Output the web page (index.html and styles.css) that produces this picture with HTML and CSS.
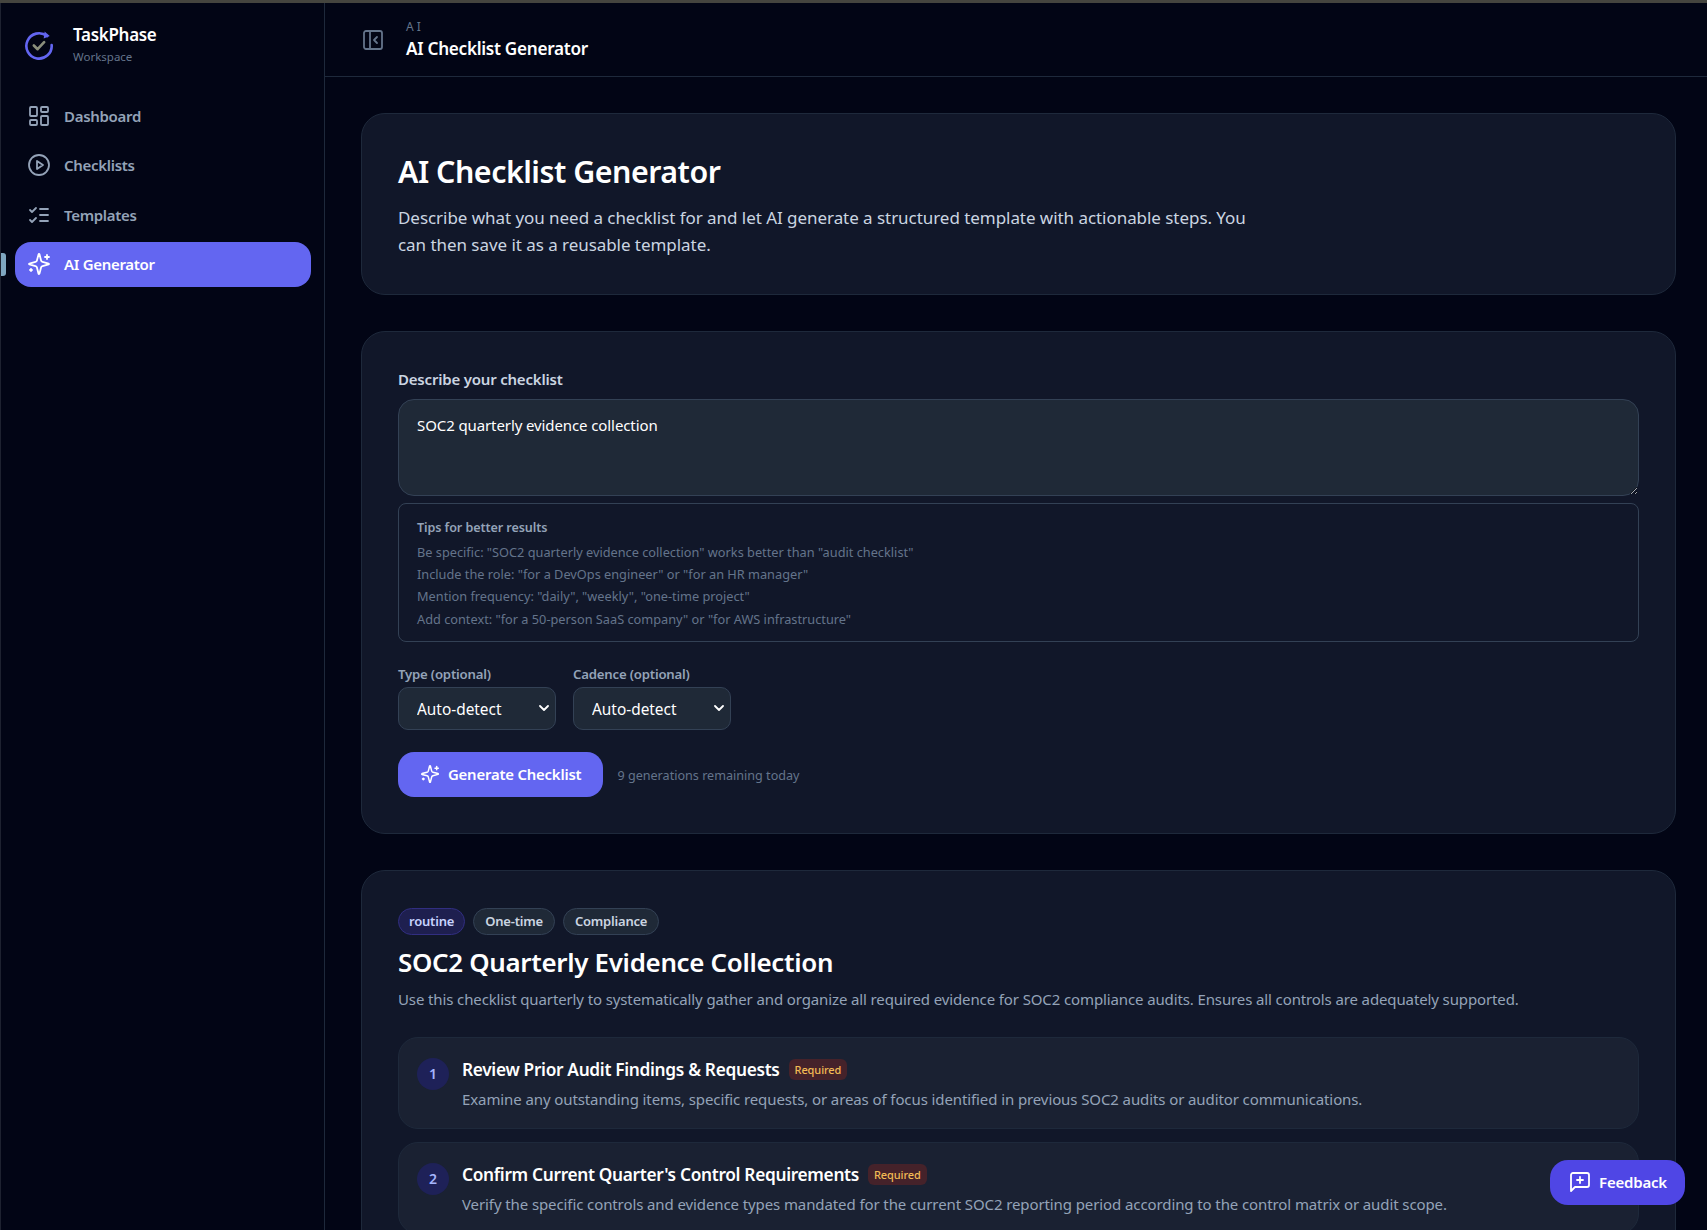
FILE: index.html
```html
<!DOCTYPE html>
<html>
<head>
  <title>AI Checklist Generator</title>
  <link rel="stylesheet" href="styles.css">
</head>
<body>
  <div class="top-edge"></div>
  <div class="app">
    <aside class="sidebar">
      <div class="brand">
        <svg class="brand-logo" viewBox="0 0 32 32" fill="none">
          <path d="M24.500 6.500A13.500 13.500 0 1 0 29.500 16" stroke="#6366f1" stroke-width="2.800" stroke-linecap="round"/>
          <path d="M22 1.500l5.500 5-6.500 2.500z" fill="#6366f1"/>
          <path d="M10.500 16.500l4 4 7-7.500" stroke="#8b8f7c" stroke-width="2.800" stroke-linecap="round" stroke-linejoin="round"/>
        </svg>
        <div>
          <div class="brand-name">TaskPhase</div>
          <div class="brand-sub">Workspace</div>
        </div>
      </div>
      <nav class="nav">
        <a class="nav-item">
          <svg class="icon" viewBox="0 0 24 24"><rect x="3" y="3" width="7" height="9" rx="1"/><rect x="14" y="3" width="7" height="5" rx="1"/><rect x="14" y="12" width="7" height="9" rx="1"/><rect x="3" y="16" width="7" height="5" rx="1"/></svg>
          Dashboard
        </a>
        <a class="nav-item">
          <svg class="icon" viewBox="0 0 24 24"><circle cx="12" cy="12" r="10"/><polygon points="10 8 16 12 10 16 10 8"/></svg>
          Checklists
        </a>
        <a class="nav-item">
          <svg class="icon" viewBox="0 0 24 24"><path d="m3 17 2 2 4-4"/><path d="m3 7 2 2 4-4"/><path d="M13 6h8"/><path d="M13 12h8"/><path d="M13 18h8"/></svg>
          Templates
        </a>
        <a class="nav-item active">
          <svg class="icon" viewBox="0 0 24 24"><path d="M9.937 15.500A2 2 0 0 0 8.500 14.063l-6.135-1.582a.5.5 0 0 1 0-.962L8.500 9.936A2 2 0 0 0 9.937 8.500l1.582-6.135a.5.5 0 0 1 .963 0L14.063 8.500A2 2 0 0 0 15.500 9.937l6.135 1.581a.5.5 0 0 1 0 .964L15.500 14.063a2 2 0 0 0-1.437 1.437l-1.582 6.135a.5.5 0 0 1-.963 0z"/><path d="M20 3v4"/><path d="M22 5h-4"/><path d="M4 17v2"/><path d="M5 18H3"/></svg>
          AI Generator
        </a>
      </nav>
      <div class="resize-handle"></div>
    </aside>

    <div class="main">
      <header class="topbar">
        <svg class="icon topbar-toggle" viewBox="0 0 24 24"><rect x="3" y="3" width="18" height="18" rx="2"/><path d="M9 3v18"/><path d="m16 15-3-3 3-3"/></svg>
        <div>
          <div class="crumb">AI</div>
          <div class="topbar-title">AI Checklist Generator</div>
        </div>
      </header>

      <main class="content">
        <section class="card intro-card">
          <h1 class="page-title">AI Checklist Generator</h1>
          <p class="page-desc">Describe what you need a checklist for and let AI generate a structured template with actionable steps. You can then save it as a reusable template.</p>
        </section>

        <section class="card form-card">
          <label class="field-label">Describe your checklist</label>
          <textarea class="prompt">SOC2 quarterly evidence collection</textarea>
          <div class="tips">
            <div class="tips-title">Tips for better results</div>
            <div>Be specific: "SOC2 quarterly evidence collection" works better than "audit checklist"</div>
            <div>Include the role: "for a DevOps engineer" or "for an HR manager"</div>
            <div>Mention frequency: "daily", "weekly", "one-time project"</div>
            <div>Add context: "for a 50-person SaaS company" or "for AWS infrastructure"</div>
          </div>
          <div class="select-row">
            <div class="select-field">
              <label class="select-label">Type (optional)</label>
              <select class="select"><option>Auto-detect</option></select>
            </div>
            <div class="select-field">
              <label class="select-label">Cadence (optional)</label>
              <select class="select"><option>Auto-detect</option></select>
            </div>
          </div>
          <div class="action-row">
            <button class="generate-btn">
              <svg class="icon icon-small" viewBox="0 0 24 24"><path d="M9.937 15.500A2 2 0 0 0 8.500 14.063l-6.135-1.582a.5.5 0 0 1 0-.962L8.500 9.936A2 2 0 0 0 9.937 8.500l1.582-6.135a.5.5 0 0 1 .963 0L14.063 8.500A2 2 0 0 0 15.500 9.937l6.135 1.581a.5.5 0 0 1 0 .964L15.500 14.063a2 2 0 0 0-1.437 1.437l-1.582 6.135a.5.5 0 0 1-.963 0z"/><path d="M20 3v4"/><path d="M22 5h-4"/><path d="M4 17v2"/><path d="M5 18H3"/></svg>
              Generate Checklist
            </button>
            <span class="remaining">9 generations remaining today</span>
          </div>
        </section>

        <section class="card result-card">
          <div class="tags">
            <span class="tag tag-accent">routine</span>
            <span class="tag">One-time</span>
            <span class="tag">Compliance</span>
          </div>
          <h2 class="result-title">SOC2 Quarterly Evidence Collection</h2>
          <p class="result-desc">Use this checklist quarterly to systematically gather and organize all required evidence for SOC2 compliance audits. Ensures all controls are adequately supported.</p>
          <div class="steps">
            <div class="step">
              <div class="step-num">1</div>
              <div>
                <div class="step-head">
                  <span class="step-title">Review Prior Audit Findings &amp; Requests</span>
                  <span class="required">Required</span>
                </div>
                <div class="step-desc">Examine any outstanding items, specific requests, or areas of focus identified in previous SOC2 audits or auditor communications.</div>
              </div>
            </div>
            <div class="step">
              <div class="step-num">2</div>
              <div>
                <div class="step-head">
                  <span class="step-title">Confirm Current Quarter's Control Requirements</span>
                  <span class="required">Required</span>
                </div>
                <div class="step-desc">Verify the specific controls and evidence types mandated for the current SOC2 reporting period according to the control matrix or audit scope.</div>
              </div>
            </div>
          </div>
        </section>
      </main>
    </div>
  </div>

  <button class="feedback-btn">
    <svg class="icon" viewBox="0 0 24 24"><path d="M21 15a2 2 0 0 1-2 2H7l-4 4V5a2 2 0 0 1 2-2h14a2 2 0 0 1 2 2z"/><path d="M12 7v6"/><path d="M9 10h6"/></svg>
    Feedback
  </button>
</body>
</html>
```

FILE: styles.css
```css
:root {
  --bg-page: #020515;
  --bg-card: #111729;
  --bg-step: #1a2132;
  --bg-input: #1f2937;
  --border: #1e293b;
  --border-input: #334155;
  --text-primary: #ffffff;
  --text-body: #cbd5e1;
  --text-secondary: #94a3b8;
  --text-muted: #64748b;
  --accent: #6366f1;
  --accent-dark: #4f46e5;
}

* {
  box-sizing: border-box;
}

html, body {
  height: 100%;
}

body {
  margin: 0;
  overflow: hidden;
  display: flex;
  flex-direction: column;
  font-family: "Noto Sans", "Open Sans", sans-serif;
  background-color: var(--bg-page);
  color: var(--text-primary);
}

.top-edge {
  height: 3px;
  flex-shrink: 0;
  background: #45453f;
}

.app {
  flex: 1;
  min-height: 0;
  display: flex;
}

.icon {
  width: 24px;
  height: 24px;
  flex-shrink: 0;
  fill: none;
  stroke: currentColor;
  stroke-width: 1.800;
  stroke-linecap: round;
  stroke-linejoin: round;
}

.icon-small {
  width: 20px;
  height: 20px;
}

/* sidebar */

.sidebar {
  position: relative;
  width: 325px;
  flex-shrink: 0;
  padding: 0 13px 0 14px;
  border-left: 1px solid #1e2230;
  border-right: 1px solid var(--border);
}

.brand {
  display: flex;
  align-items: center;
  gap: 19px;
  height: 73px;
  padding: 10px 0 0 9px;
}

.brand-logo {
  width: 30px;
  height: 30px;
  flex-shrink: 0;
}

.brand-name {
  font-size: 17px;
  font-weight: 600;
  line-height: 24px;
  letter-spacing: -0.3px;
}

.brand-sub {
  font-size: 11.500px;
  line-height: 20px;
  color: var(--text-muted);
}

.nav {
  display: flex;
  flex-direction: column;
  gap: 4px;
  margin-top: 17px;
}

.nav-item {
  display: flex;
  align-items: center;
  gap: 13.500px;
  height: 45.500px;
  padding-left: 11.500px;
  border-radius: 16px;
  font-size: 15px;
  font-weight: 600;
  letter-spacing: -0.3px;
  color: var(--text-secondary);
}

.nav-item.active {
  background-color: var(--accent);
  color: var(--text-primary);
}

.resize-handle {
  position: absolute;
  left: 0;
  top: 250px;
  width: 5px;
  height: 23px;
  background: #7fa6c0;
  border-radius: 0 3px 3px 0;
}

/* main column */

.main {
  flex: 1;
  min-width: 0;
  display: flex;
  flex-direction: column;
}

.topbar {
  height: 74px;
  flex-shrink: 0;
  display: flex;
  align-items: center;
  gap: 21.500px;
  padding-left: 35.500px;
  border-bottom: 1px solid var(--border);
}

.topbar-toggle {
  color: var(--text-muted);
}

.crumb {
  font-size: 12px;
  line-height: 18px;
  letter-spacing: 3px;
  color: var(--text-muted);
}

.topbar-title {
  font-size: 17.200px;
  font-weight: 600;
  line-height: 26px;
  letter-spacing: -0.3px;
}

.content {
  flex: 1;
  min-height: 0;
  overflow: hidden;
  display: flex;
  flex-direction: column;
  gap: 36px;
  padding: 36px 31px 0 36px;
}

.card {
  flex-shrink: 0;
  padding: 36px;
  border: 1px solid var(--border);
  border-radius: 24px;
  background-color: var(--bg-card);
}

.page-title {
  margin: 0 0 10px;
  font-size: 30.400px;
  font-weight: 600;
  line-height: 44px;
  letter-spacing: -0.5px;
}

.page-desc {
  margin: 0;
  max-width: 880px;
  font-size: 17px;
  line-height: 27.200px;
  letter-spacing: -0.05px;
  color: var(--text-body);
}

/* form */

.field-label {
  display: block;
  font-size: 15px;
  font-weight: 600;
  line-height: 22px;
  margin-bottom: 9px;
  letter-spacing: -0.2px;
  color: var(--text-body);
}

.prompt {
  display: block;
  width: 100%;
  height: 97px;
  padding: 13px 18px;
  border: 1px solid var(--border-input);
  border-radius: 16px;
  background-color: var(--bg-input);
  color: var(--text-primary);
  font-family: inherit;
  font-size: 15px;
  letter-spacing: -0.1px;
  line-height: 24px;
  outline: none;
}

.tips {
  margin-top: 7px;
  padding: 13px 18px 11px;
  border: 1px solid var(--border-input);
  border-radius: 8px;
  font-size: 12.750px;
  line-height: 22.300px;
  color: var(--text-muted);
}

.tips-title {
  font-size: 12.600px;
  font-weight: 600;
  margin-bottom: 1px;
  letter-spacing: -0.1px;
  color: var(--text-secondary);
}

.select-row {
  display: flex;
  gap: 17.500px;
  margin-top: 22px;
}

.select-label {
  display: block;
  font-size: 13.200px;
  font-weight: 600;
  line-height: 20px;
  margin-bottom: 3px;
  letter-spacing: -0.2px;
  color: var(--text-secondary);
}

.select {
  display: block;
  appearance: none;
  width: 157.500px;
  height: 43px;
  padding: 3px 24px 0 18px;
  border: 1px solid var(--border-input);
  border-radius: 10px;
  background-color: var(--bg-input);
  background-image: url("data:image/svg+xml,%3Csvg xmlns='http://www.w3.org/2000/svg' viewBox='0 0 10 6' fill='none'%3E%3Cpath d='M1 1l4 4 4-4' stroke='white' stroke-width='1.800' stroke-linecap='round' stroke-linejoin='round'/%3E%3C/svg%3E");
  background-repeat: no-repeat;
  background-position: right 6px center;
  background-size: 10px 6px;
  color: var(--text-primary);
  font-family: inherit;
  font-size: 15.400px;
}

.action-row {
  display: flex;
  align-items: center;
  gap: 14px;
  margin-top: 22px;
}

.generate-btn {
  display: flex;
  align-items: center;
  gap: 8px;
  height: 45px;
  padding: 0 22px 0 22px;
  border: none;
  border-radius: 16px;
  background-color: var(--accent);
  color: var(--text-primary);
  font-family: inherit;
  font-size: 14.900px;
  font-weight: 600;
  letter-spacing: -0.2px;
}

.remaining {
  padding-top: 2px;
  font-size: 12.600px;
  color: var(--text-muted);
}

/* generated result */

.tags {
  display: flex;
  gap: 8px;
  padding-top: 1px;
}

.tag {
  height: 27px;
  padding: 0 11px;
  display: flex;
  align-items: center;
  border: 1px solid var(--border-input);
  border-radius: 14px;
  background-color: var(--bg-input);
  font-size: 13px;
  font-weight: 600;
  letter-spacing: -0.2px;
  color: var(--text-body);
}

.tag-accent {
  padding: 0 10px;
  border-color: #312e81;
  background-color: #1e1f4f;
  color: #c7d2fe;
}

.result-title {
  margin: 8px 0 0;
  font-size: 25.900px;
  font-weight: 600;
  line-height: 38px;
  letter-spacing: -0.3px;
}

.result-desc {
  margin: 6px 0 0;
  font-size: 15px;
  letter-spacing: -0.12px;
  line-height: 24px;
  color: var(--text-secondary);
}

.steps {
  display: flex;
  flex-direction: column;
  gap: 13px;
  margin-top: 26px;
}

.step {
  display: flex;
  gap: 13px;
  min-height: 92px;
  padding: 18px 18px 0;
  border: 1px solid var(--border);
  border-radius: 20px;
  background-color: var(--bg-step);
}

.step-num {
  width: 32px;
  height: 32px;
  margin-top: 2px;
  flex-shrink: 0;
  display: flex;
  align-items: center;
  justify-content: center;
  border-radius: 50%;
  background-color: #1e2158;
  color: #a5b4fc;
  font-size: 14px;
  font-weight: 600;
}

.step-head {
  display: flex;
  align-items: center;
  gap: 9px;
  height: 28px;
}

.step-title {
  font-size: 17.300px;
  font-weight: 600;
  letter-spacing: -0.32px;
}

.required {
  padding: 0 6px;
  height: 21px;
  display: flex;
  align-items: center;
  border-radius: 6px;
  background-color: #45222a;
  color: #f2bb55;
  font-size: 11px;
  font-weight: 500;
  letter-spacing: -0.1px;
}

.step-desc {
  margin-top: 3px;
  font-size: 15px;
  letter-spacing: -0.1px;
  line-height: 25px;
  color: var(--text-secondary);
}

.feedback-btn {
  position: fixed;
  right: 22px;
  bottom: 25px;
  height: 45px;
  padding: 0 18px 1px 18px;
  display: flex;
  align-items: center;
  gap: 7px;
  border: none;
  border-radius: 18px;
  background-color: var(--accent-dark);
  color: var(--text-primary);
  font-family: inherit;
  font-size: 15px;
  font-weight: 600;
  letter-spacing: -0.2px;
}
```
